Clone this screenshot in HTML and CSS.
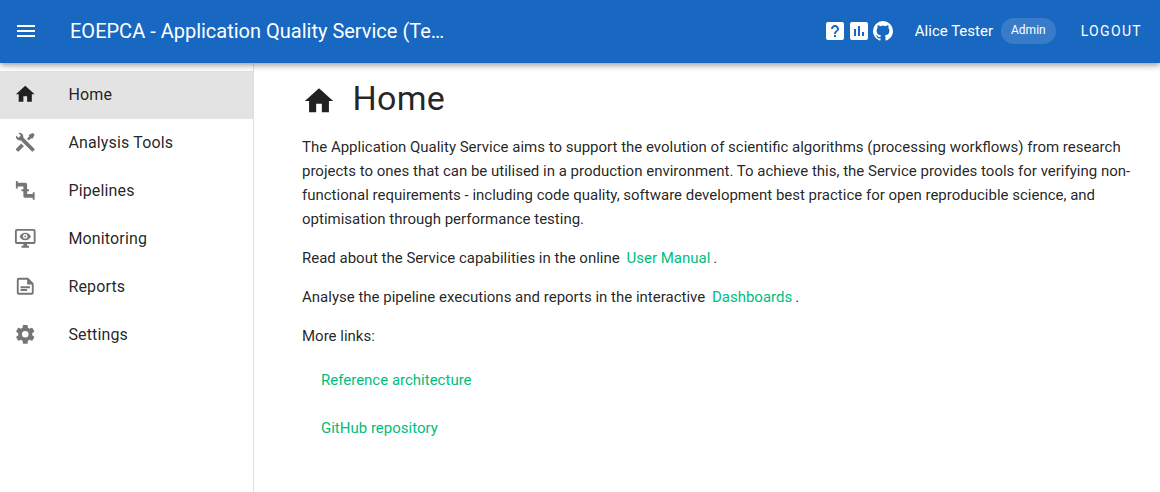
FILE: index.html
```html
<!DOCTYPE html>
<html lang="en">
<head>
<meta charset="utf-8">
<title>EOEPCA - Application Quality Service</title>
<link rel="stylesheet" href="styles.css">
</head>
<body>
<header class="app-bar">
  <svg class="icon menu-icon" viewBox="0 0 24 24"><path d="M3 6h18v2H3V6m0 5h18v2H3v-2m0 5h18v2H3v-2Z"/></svg>
  <div class="app-title">EOEPCA - Application Quality Service (Te…</div>
  <nav class="bar-icons">
    <svg class="icon" viewBox="0 0 24 24"><path d="M5 3h14a2 2 0 0 1 2 2v14a2 2 0 0 1-2 2H5a2 2 0 0 1-2-2V5a2 2 0 0 1 2-2m6 13v2h2v-2h-2m1-10c-2.200 0-4 1.800-4 4h2a2 2 0 1 1 4 0c0 2-3 1.750-3 5h2c0-2.250 3-2.500 3-5 0-2.200-1.800-4-4-4Z"/></svg>
    <svg class="icon" viewBox="0 0 24 24"><path d="M9 17H7v-7h2m4 7h-2V7h2m4 10h-2v-4h2m2-10H5a2 2 0 0 0-2 2v14a2 2 0 0 0 2 2h14a2 2 0 0 0 2-2V5a2 2 0 0 0-2-2Z"/></svg>
    <svg class="icon" viewBox="0 0 24 24"><path d="M12 2A10 10 0 0 0 2 12c0 4.420 2.870 8.170 6.840 9.500.5.080.66-.23.66-.5v-1.690c-2.770.6-3.360-1.340-3.360-1.340-.46-1.160-1.110-1.470-1.110-1.470-.91-.62.070-.6.070-.6 1 .070 1.530 1.030 1.530 1.030.87 1.520 2.340 1.070 2.910.83.090-.65.350-1.090.63-1.340-2.220-.25-4.550-1.110-4.550-4.920 0-1.110.38-2 1.030-2.710-.1-.25-.45-1.290.1-2.640 0 0 .84-.27 2.750 1.020.79-.22 1.650-.33 2.500-.33s1.710.11 2.500.33c1.910-1.290 2.750-1.020 2.750-1.020.55 1.350.2 2.390.1 2.640.65.710 1.030 1.600 1.030 2.710 0 3.820-2.340 4.660-4.570 4.910.36.310.69.920.69 1.850V21c0 .27.160.59.670.5C19.140 20.160 22 16.420 22 12A10 10 0 0 0 12 2Z"/></svg>
  </nav>
  <span class="user-name">Alice Tester</span>
  <span class="role">Admin</span>
  <span class="logout">LOGOUT</span>
</header>
<div class="layout">
  <nav class="sidebar">
    <a class="nav-item active"><svg class="icon" viewBox="0 0 24 24"><path d="M10 20v-6h4v6h5v-8h3L12 3 2 12h3v8h5Z"/></svg><span>Home</span></a>
    <a class="nav-item"><svg class="icon" viewBox="0 0 24 24"><path d="m21.710 20.290-1.420 1.420a1 1 0 0 1-1.410 0L7 9.850A3.810 3.810 0 0 1 6 10a4 4 0 0 1-3.780-5.300l2.540 2.540.530-.53 1.420-1.420.53-.53L4.700 2.220A4 4 0 0 1 10 6a3.810 3.810 0 0 1-.15 1l11.860 11.880a1 1 0 0 1 0 1.410M2.290 18.880a1 1 0 0 0 0 1.410l1.420 1.420a1 1 0 0 0 1.410 0l5.470-5.460-2.830-2.830M20 2l-4 2v2l-2.170 2.170 2 2L18 8h2l2-4-2-2Z"/></svg><span>Analysis Tools</span></a>
    <a class="nav-item"><svg class="icon" viewBox="0 0 24 24"><path d="M22 14h-2v2h-6v-3h2v-2h-2V6a2 2 0 0 0-2-2H4V2H2v8h2V8h6v3H8v2h2v5a2 2 0 0 0 2 2h8v2h2v-8Z"/></svg><span>Pipelines</span></a>
    <a class="nav-item"><svg class="icon" viewBox="0 0 24 24"><path d="M21 16V4H3v12h18m0-14a2 2 0 0 1 2 2v12a2 2 0 0 1-2 2h-7v2h2v2H8v-2h2v-2H3a2 2 0 0 1-2-2V4a2 2 0 0 1 2-2h18m-9 4c2.730 0 5.060 1.660 6 4-.94 2.340-3.270 4-6 4s-5.060-1.660-6-4c.94-2.340 3.270-4 6-4m0 1.500a2.500 2.500 0 1 0 0 5 2.500 2.500 0 0 0 0-5m0 1.500a1 1 0 1 1 0 2 1 1 0 0 1 0-2Z"/></svg><span>Monitoring</span></a>
    <a class="nav-item"><svg class="icon" viewBox="0 0 24 24"><path fill-rule="evenodd" d="M15 3H5a2 2 0 0 0-2 2v14a2 2 0 0 0 2 2h14a2 2 0 0 0 2-2V9l-6-6m4 16H5V5h9v5h5v9m-2-7H7v2h10v-2m-3 3H7v2h7v-2Z"/></svg><span>Reports</span></a>
    <a class="nav-item"><svg class="icon" viewBox="0 0 24 24"><path d="M12 15.500A3.500 3.500 0 0 1 8.500 12 3.500 3.500 0 0 1 12 8.500a3.500 3.500 0 0 1 3.500 3.500 3.500 3.500 0 0 1-3.500 3.500m7.430-2.530c.04-.32.070-.64.070-.97s-.03-.66-.07-1l2.110-1.630c.19-.15.240-.42.120-.64l-2-3.460c-.12-.22-.39-.31-.61-.22l-2.490 1c-.52-.39-1.060-.73-1.690-.98l-.37-2.650A.506.506 0 0 0 14 2h-4c-.25 0-.46.180-.5.420l-.37 2.650c-.63.250-1.170.59-1.690.98l-2.490-1c-.22-.09-.49 0-.61.220l-2 3.460c-.13.220-.07.490.12.640L4.570 11c-.04.340-.07.670-.07 1s.03.650.07.970l-2.110 1.660c-.19.150-.25.420-.12.640l2 3.460c.12.220.39.300.61.220l2.490-1.010c.52.400 1.060.740 1.690.990l.37 2.650c.04.240.25.420.5.420h4c.25 0 .46-.18.5-.42l.37-2.650c.63-.26 1.170-.59 1.690-.99l2.490 1.010c.22.080.49 0 .61-.22l2-3.460c.12-.22.070-.49-.12-.64l-2.110-1.660Z"/></svg><span>Settings</span></a>
  </nav>
  <main class="content">
    <h1 class="page-title"><svg class="title-icon" viewBox="0 0 24 24"><path d="M10 20v-6h4v6h5v-8h3L12 3 2 12h3v8h5Z"/></svg><span>Home</span></h1>
    <p>The Application Quality Service aims to support the evolution of scientific algorithms (processing workflows) from research<br>projects to ones that can be utilised in a production environment. To achieve this, the Service provides tools for verifying non-<br>functional requirements - including code quality, software development best practice for open reproducible science, and<br>optimisation through performance testing.</p>
    <p>Read about the Service capabilities in the online <a class="link">User Manual</a>.</p>
    <p>Analyse the pipeline executions and reports in the interactive <a class="link">Dashboards</a>.</p>
    <p>More links:</p>
    <ul class="links">
      <li><a>Reference architecture</a></li>
      <li><a>GitHub repository</a></li>
    </ul>
  </main>
</div>
</body>
</html>
```
FILE: styles.css
```css
* { box-sizing: border-box; }
body {
  margin: 0;
  height: 492px;
  overflow: hidden;
  display: flex;
  flex-direction: column;
  font-family: Roboto, sans-serif;
  color: rgba(0, 0, 0, .87);
  background: #fff;
}
.icon { width: 24px; height: 24px; fill: currentColor; flex: none; display: block; }
.app-bar {
  height: 63px;
  flex: none;
  display: flex;
  align-items: center;
  padding: 0 18px 1px 14px;
  background: #1867c0;
  color: #fff;
  position: relative;
  z-index: 1;
  box-shadow: 0 2px 4px -1px rgba(0,0,0,.2), 0 4px 5px rgba(0,0,0,.14), 0 1px 10px rgba(0,0,0,.12);
}
.app-title { margin-left: 32px; font-size: 20px; line-height: 30px; white-space: nowrap; }
.bar-icons { display: flex; margin-left: auto; }
.user-name { margin-left: 20px; font-size: 15px; }
.role { margin-left: 8px; height: 26px; line-height: 24px; padding: 0 10px; border-radius: 13px; font-size: 12px; background: rgba(255,255,255,.14); }
.logout { margin-left: 25px; font-size: 14px; letter-spacing: 1.330px; }
.layout { display: flex; flex: 1; min-height: 0; }
.sidebar { width: 254px; flex: none; padding-top: 8px; border-right: 1px solid #e0e0e0; }
.nav-item { height: 48px; display: flex; align-items: center; padding: 0 0 2px 14.250px; font-size: 16px; letter-spacing: .15px; }
.nav-item span { margin-left: 31.650px; }
.nav-item .icon { width: 22.500px; height: 22.500px; margin-top: 1px; color: #757575; }
.nav-item.active { background: #e3e3e3; }
.nav-item.active .icon { color: #212121; }
.content { flex: 1; padding: 11px 0 0 48px; font-size: 15px; line-height: 24px; white-space: nowrap; }
.page-title { display: flex; align-items: center; margin: 0 0 12px; height: 49px; font-size: 34px; font-weight: 400; letter-spacing: .25px; }
.title-icon { width: 34px; height: 34px; margin-top: 5px; fill: currentColor; }
.page-title span { margin: 0 0 2px 16.500px; }
.content p { margin: 0 0 15px; }
.link { color: #00bd7e; padding: 0 3px; }
.links { margin: 20px 0 0; padding: 0 0 0 19px; list-style: none; color: #00bd7e; }
.links li { height: 48px; }
```
